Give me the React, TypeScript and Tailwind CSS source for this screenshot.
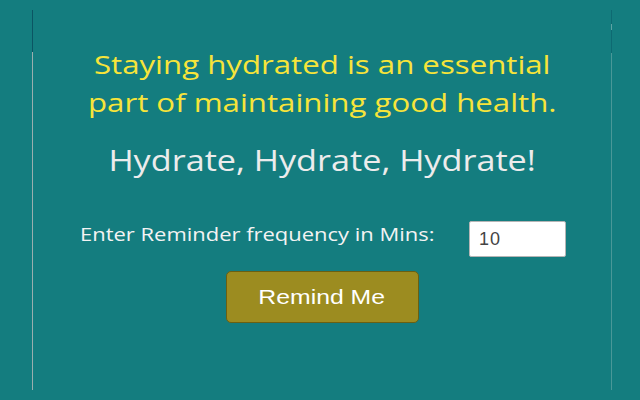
export default function App() {
  return (
    <div className="w-[640px] h-[400px] bg-[#147d7f] flex pl-[32px] pt-[10px]">
      <div className="w-[580px] h-[380px] flex">
        <div className="w-px h-full flex flex-col shrink-0">
          <div className="h-[42px] bg-[#0b5563]" />
          <div className="flex-1 bg-[#9aaeae]" />
        </div>
        <div className="flex-1 flex flex-col items-center pt-[36px]" style={{ fontFamily: '"Open Sans", sans-serif' }}>
          <p className="text-[#f7e43a] text-[26px] leading-[37.5px] text-center scale-x-[1.2]">
            Staying hydrated is an essential
            <br />
            part of maintaining good health.
          </p>
          <p className="text-[#ececec] text-[28.5px] leading-[40px] mt-[19px] text-center scale-x-[1.2]">Hydrate, Hydrate, Hydrate!</p>
          <div className="w-full flex items-start mt-[41px] pl-[47px]">
            <span className="text-[#f3f3f3] text-[18px] leading-[24px] mt-[1px] w-[389px] inline-block origin-left scale-x-[1.22]">Enter Reminder frequency in Mins:</span>
            <input
              defaultValue="10"
              className="w-[97px] h-[36px] bg-white border border-[#b5b5b5] rounded-[2px] px-[9px] text-[#444] text-[18px] tracking-[1px] outline-none"
              style={{ fontFamily: '"Liberation Sans", Arial, sans-serif' }}
            />
          </div>
          <button
            className="mt-[14px] w-[193px] h-[52px] bg-[#9c8c20] border border-[#6a6012] rounded-[5px] text-white text-[21px] flex items-center justify-center"
            style={{ fontFamily: '"Liberation Sans", Arial, sans-serif' }}
          >
            <span className="inline-block scale-x-[1.18]">Remind Me</span>
          </button>
        </div>
        <div className="w-px h-full flex flex-col shrink-0">
          <div className="h-[14px] bg-[#0e6a72]" />
          <div className="h-[6px] bg-[#5fa3a3]" />
          <div className="h-[23px] bg-[#0e6a72]" />
          <div className="flex-1 bg-[#4a9898]" />
        </div>
      </div>
    </div>
  );
}
